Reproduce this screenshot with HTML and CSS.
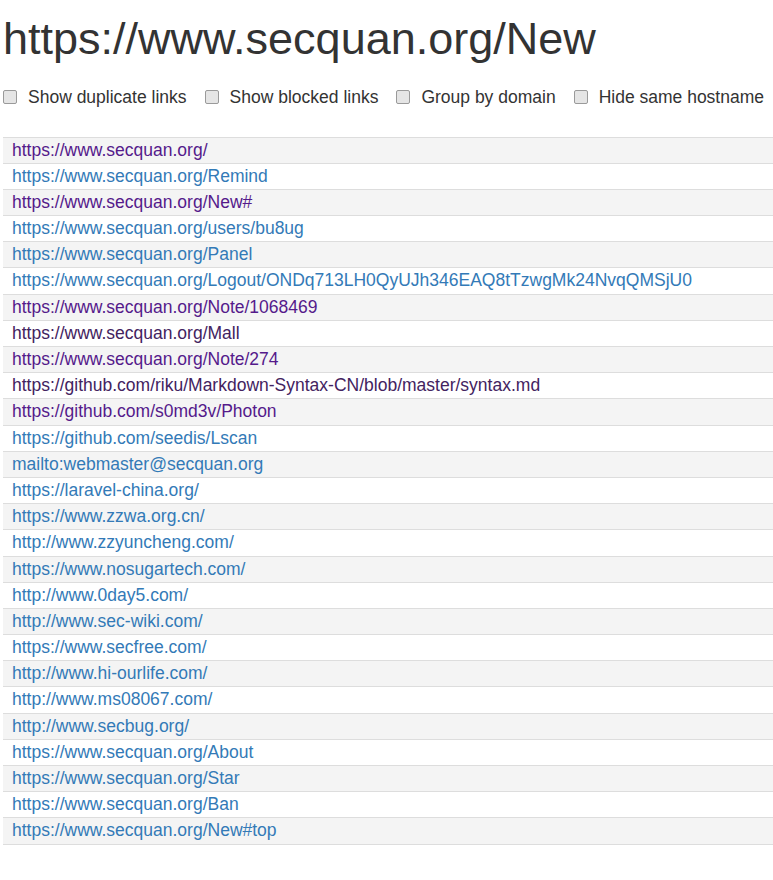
FILE: index.html
```html
<!DOCTYPE html>
<html>
<head>
<meta charset="utf-8">
<link rel="stylesheet" href="styles.css">
</head>
<body>
<h1 class="title">https://www.secquan.org/New</h1>
<div class="options">
  <label class="opt"><input type="checkbox" class="cb"><span>Show duplicate links</span></label>
  <label class="opt"><input type="checkbox" class="cb"><span>Show blocked links</span></label>
  <label class="opt"><input type="checkbox" class="cb"><span>Group by domain</span></label>
  <label class="opt"><input type="checkbox" class="cb"><span>Hide same hostname</span></label>
</div>
<div class="links">
  <div class="row"><a class="link visited" href="#">https://www.secquan.org/</a></div>
  <div class="row"><a class="link" href="#">https://www.secquan.org/Remind</a></div>
  <div class="row"><a class="link visited" href="#">https://www.secquan.org/New#</a></div>
  <div class="row"><a class="link" href="#">https://www.secquan.org/users/bu8ug</a></div>
  <div class="row"><a class="link" href="#">https://www.secquan.org/Panel</a></div>
  <div class="row"><a class="link" href="#">https://www.secquan.org/Logout/ONDq713LH0QyUJh346EAQ8tTzwgMk24NvqQMSjU0</a></div>
  <div class="row"><a class="link visited" href="#">https://www.secquan.org/Note/1068469</a></div>
  <div class="row"><a class="link visited dark" href="#">https://www.secquan.org/Mall</a></div>
  <div class="row"><a class="link visited" href="#">https://www.secquan.org/Note/274</a></div>
  <div class="row"><a class="link visited dark" href="#">https://github.com/riku/Markdown-Syntax-CN/blob/master/syntax.md</a></div>
  <div class="row"><a class="link visited" href="#">https://github.com/s0md3v/Photon</a></div>
  <div class="row"><a class="link" href="#">https://github.com/seedis/Lscan</a></div>
  <div class="row"><a class="link" href="#">mailto:webmaster@secquan.org</a></div>
  <div class="row"><a class="link" href="#">https://laravel-china.org/</a></div>
  <div class="row"><a class="link" href="#">https://www.zzwa.org.cn/</a></div>
  <div class="row"><a class="link" href="#">http://www.zzyuncheng.com/</a></div>
  <div class="row"><a class="link" href="#">https://www.nosugartech.com/</a></div>
  <div class="row"><a class="link" href="#">http://www.0day5.com/</a></div>
  <div class="row"><a class="link" href="#">http://www.sec-wiki.com/</a></div>
  <div class="row"><a class="link" href="#">https://www.secfree.com/</a></div>
  <div class="row"><a class="link" href="#">http://www.hi-ourlife.com/</a></div>
  <div class="row"><a class="link" href="#">http://www.ms08067.com/</a></div>
  <div class="row"><a class="link" href="#">http://www.secbug.org/</a></div>
  <div class="row"><a class="link" href="#">https://www.secquan.org/About</a></div>
  <div class="row"><a class="link" href="#">https://www.secquan.org/Star</a></div>
  <div class="row"><a class="link" href="#">https://www.secquan.org/Ban</a></div>
  <div class="row"><a class="link" href="#">https://www.secquan.org/New#top</a></div>
</div>
</body>
</html>
```
FILE: styles.css
```css
html, body {
  margin: 0;
  padding: 0;
  background: #fff;
}
body {
  font-family: "Liberation Sans", Arial, sans-serif;
  color: #333;
  font-size: 17.5px;
}
.title {
  font-size: 45px;
  font-weight: 400;
  line-height: 1.1;
  margin: 14px 0 0 3px;
  color: #333;
}
.options {
  display: flex;
  align-items: center;
  margin: 21px 0 0 3px;
  gap: 18px;
  line-height: 25px;
}
.opt {
  display: flex;
  align-items: center;
  gap: 11px;
}
.cb {
  appearance: none;
  -webkit-appearance: none;
  width: 14px;
  height: 14px;
  margin: 0;
  border: 1px solid #9a9a9a;
  border-radius: 2px;
  background: #e5e5e5;
  box-sizing: border-box;
}
.links {
  margin: 27px 0 0 3px;
  display: flex;
  flex-direction: column;
  border-bottom: 1px solid #ddd;
}
.row {
  border-top: 1px solid #ddd;
  padding: 0 9px;
  line-height: 25.2px;
  height: 25.2px;
  white-space: nowrap;
}
.row:nth-child(odd) {
  background: #f4f4f4;
}
.link {
  color: #337ab7;
  text-decoration: none;
}
.link.visited {
  color: #551a8b;
}
.link.visited.dark {
  color: #43235f;
}
```
